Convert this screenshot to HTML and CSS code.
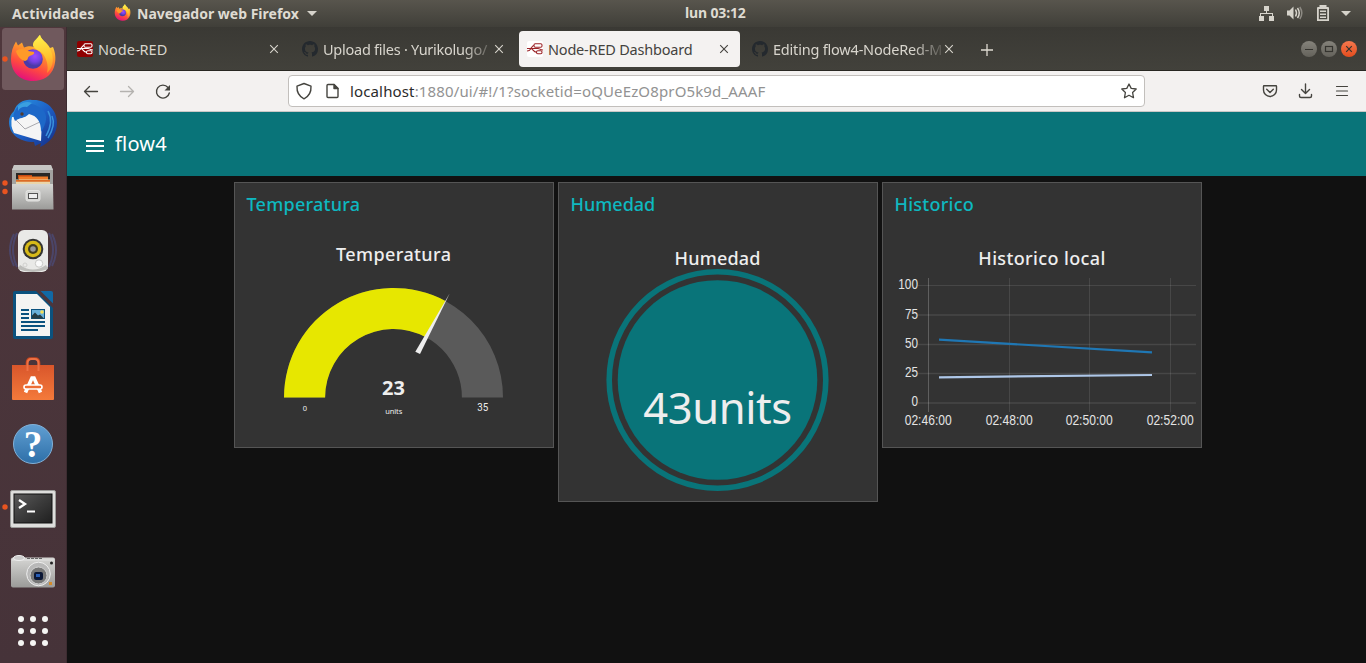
FILE: index.html
```html
<!DOCTYPE html>
<html lang="es">
<head>
<meta charset="utf-8">
<title>Node-RED Dashboard</title>
<link rel="stylesheet" href="styles.css">
</head>
<body>
<svg class="defs" width="0" height="0">
  <defs>
    <linearGradient id="flame" x1=".75" y1="0" x2=".35" y2="1"><stop offset="0" stop-color="#fff44f"/><stop offset=".35" stop-color="#ffa02b"/><stop offset=".7" stop-color="#ff4a3f"/><stop offset="1" stop-color="#e3107c"/></linearGradient>
    <linearGradient id="ear" x1=".5" y1="0" x2=".6" y2="1"><stop offset="0" stop-color="#fff14a"/><stop offset=".6" stop-color="#ffc22f"/><stop offset="1" stop-color="#ff8a2c"/></linearGradient>
    <radialGradient id="globe" cx=".6" cy=".35"><stop offset="0" stop-color="#a04bff"/><stop offset=".6" stop-color="#7542e5"/><stop offset="1" stop-color="#4b3aa8"/></radialGradient>
    <linearGradient id="metal" x1="0" y1="0" x2="0" y2="1"><stop offset="0" stop-color="#d6d6d4"/><stop offset="1" stop-color="#9b9b99"/></linearGradient>
    <linearGradient id="blue" x1="0" y1="0" x2="0" y2="1"><stop offset="0" stop-color="#619fd2"/><stop offset="1" stop-color="#2d6fa8"/></linearGradient>
    <linearGradient id="bird" x1="0" y1="0" x2="1" y2="1"><stop offset="0" stop-color="#2b9be4"/><stop offset=".5" stop-color="#1d5fc6"/><stop offset="1" stop-color="#152a80"/></linearGradient>
    <linearGradient id="bag" x1="0" y1="0" x2="0" y2="1"><stop offset="0" stop-color="#d9562b"/><stop offset="1" stop-color="#f47a3b"/></linearGradient>
    <linearGradient id="screen" x1="0" y1="0" x2="1" y2="1"><stop offset="0" stop-color="#5a5a5a"/><stop offset=".5" stop-color="#3b3b3b"/><stop offset="1" stop-color="#1f1f1f"/></linearGradient>
    <symbol id="firefox" viewBox="0 0 46 48">
      <path fill="url(#flame)" d="M23 47C9 47 1 37 1 25 1 18 3 12 6 7.500L8 11.500 12 8.500 14 13.500C18 12 21 12 24 13L27 6C28 3 29 1.500 30 1 31 6 37 8 40 14L43 13C46 20 46 27 44 33 41 42 33 47 23 47Z"/>
      <path fill="url(#ear)" d="M30 1C31 6 38 9 41 17 45 26 42 35 37 39 39 31 36 24 33 20 30 16 22 15 23 10 24 6 28 4 30 1Z"/>
      <circle cx="23" cy="25" r="9.800" fill="url(#globe)"/>
      <path fill="#ff9a28" d="M6 17C10 14 14 14 18 17L24 18C25 21 21 21 19 22.500 17 24 19 26 15 27 11 26 7 22 6 17Z"/>
    </symbol>
    <symbol id="github" viewBox="0 0 16 16"><path fill="#24292e" d="M8 0C3.580 0 0 3.580 0 8c0 3.540 2.290 6.530 5.470 7.590.4.070.55-.17.55-.38 0-.19-.01-.82-.01-1.490-2.010.37-2.530-.49-2.690-.94-.09-.23-.48-.94-.82-1.130-.28-.15-.68-.52-.01-.53.63-.01 1.080.58 1.230.82.72 1.210 1.870.87 2.330.66.07-.52.28-.87.51-1.070-1.780-.2-3.640-.89-3.640-3.950 0-.87.31-1.590.82-2.150-.08-.2-.36-1.020.08-2.120 0 0 .67-.21 2.200.82.64-.18 1.320-.27 2-.27s1.360.09 2 .27c1.530-1.040 2.200-.82 2.200-.82.44 1.100.16 1.920.08 2.120.51.56.82 1.270.82 2.150 0 3.070-1.870 3.750-3.650 3.950.29.25.54.73.54 1.480 0 1.070-.01 1.930-.01 2.200 0 .21.15.46.55.38A8.010 8.010 0 0 0 16 8c0-4.420-3.580-8-8-8z"/></symbol>
    <symbol id="nodes" viewBox="0 0 16 16"><g fill="none" stroke="currentColor" stroke-width="1.100"><rect x="7" y="2.700" width="8" height="3.600" rx="1.200"/><rect x="9.500" y="9.700" width="5.500" height="3.100" rx="1.200"/><path d="M0 7.500H3C5.500 7.500 4.500 4.500 7 4.500M0 10C2 10 3 9.500 4 7.500C5.500 7.500 6.500 11.200 9.500 11.200M4 7.500H11C13 7.500 13 9 16 9"/></g></symbol>
    <symbol id="close" viewBox="0 0 10 10"><path d="M1.200 1.200 8.800 8.800M8.800 1.200 1.200 8.800" stroke="currentColor" stroke-width="1.100"/></symbol>
  </defs>
</svg>

<header class="topbar">
  <span class="activities">Actividades</span>
  <svg class="app-icon" width="17" height="17"><use href="#firefox"/></svg>
  <span class="app-name">Navegador web Firefox</span>
  <i class="caret"></i>
  <span class="clock">lun 03:12</span>
  <svg class="tray" width="120" height="27" viewBox="1246 0 120 27" fill="#d6d3cb">
    <path d="M1264 6h5v5h-2v2h6v3h1v5h-5v-5h3v-2h-11v2h3v5h-5v-5h1v-3h6v-2h-2z"/>
    <path d="M1287 10.500h2.500l4-4v13l-4-4H1287z"/>
    <path d="M1295.500 9.500q2 3.500 0 7M1297.500 8q3.500 5 0 10" fill="none" stroke="#d6d3cb" stroke-width="1.500"/>
    <path d="M1299.800 7q4 6 0 12" fill="none" stroke="#8d8a83" stroke-width="1.500"/>
    <path d="M1318 7h1.500V5h7v2h1.500q1 0 1 1V21h-12V8q0-1 1-1zm.8 2V19.200h8.400V9z" fill-rule="evenodd"/>
    <path d="M1320 10.500h6v1.500h-6zm0 3h6v1.500h-6zm0 3h6v1.500h-6z"/>
    <path d="M1341 11h10l-5 5z"/>
  </svg>
</header>

<div class="desktop">
  <nav class="dock">
    <div class="launcher"><svg viewBox="0 0 67 64"><rect x="2" y="1" width="62" height="62" rx="3.500" fill="#70595d"/><circle cx="5" cy="32" r="2.700" fill="#e95420"/><use href="#firefox" x="10" y="7" width="46" height="48"/></svg></div>
    <div class="launcher"><svg viewBox="0 0 67 64">
      <path fill="url(#bird)" d="M14 20C17 11 25 8 32 9 46 8 57 18 57 32 57 43 50 52 40 56L41 52 35 55 34 51C19 51 9 43 9 31 9 26 11 23 14 20Z"/>
      <path fill="#f5f5f5" d="M12 26Q23 27 30 22L42 29 41 50 14 42Q10 35 12 26Z"/><path fill="none" stroke="#a9a9ae" d="M16 29 25 38 42 30"/>
      <path fill="#1d68c8" d="M15 20C20 9 33 11 42 18 49 24 46 33 41 41 41 30 37 25 29 23 24 28 20 26 15 30 13 26 13 23 15 20Z"/><circle cx="22" cy="23" r="1.700" fill="#523b30"/>
      <path fill="#3a9fe0" d="M18 15Q25 9 32 12L27 16Q21 15 18 20z"/><path fill="none" stroke="#3a91dc" stroke-width="1.500" d="M48 20Q54 31 46 45M52 25Q56 34 48 47"/>
    </svg></div>
    <div class="launcher"><svg viewBox="0 0 67 64">
      <path d="M14 10h37l2 5v27H12V15z" fill="#a3a3a1"/><path d="M14 10h37l2 5H12z" fill="#c6c6c4"/><path d="M16 18h34v14H16z" fill="#292725"/><path d="M18 20h14v4H18z" fill="#c64b13"/><path d="M19 21.500h29v4H19z" fill="#f07c28"/><path d="M16 24.500h34v5H16z" fill="#ead5aa"/><path d="M16 25h34v1.800H16z" fill="#db6b26"/>
      <path d="M12 29h41l.5 25.500H12z" fill="url(#metal)"/><rect x="26" y="35.500" width="14" height="10.500" rx="2" fill="#d8d8d6" stroke="#e4e4e2"/><rect x="28.500" y="38.500" width="9" height="5" fill="#eee" stroke="#555"/>
      <circle cx="5" cy="28" r="2.700" fill="#e95420"/><circle cx="5" cy="36.500" r="2.700" fill="#e95420"/>
    </svg></div>
    <div class="launcher"><svg viewBox="0 0 67 64">
      <path d="M14 15Q6 31 14 47M52 15Q60 31 52 47M17 14Q9 31 17 48M49 14Q57 31 49 48" fill="none" stroke="#4b4568" stroke-width="2"/>
      <rect x="18" y="11" width="30" height="42" rx="6" fill="#e9e9e7"/><path d="M20 46Q33 55 46 46L48 50Q33 56 18 50z" fill="#bdbdba"/>
      <circle cx="33" cy="30" r="10.300" fill="#343432"/><circle cx="33" cy="30" r="8.300" fill="#d6b918"/><circle cx="33" cy="30" r="5" fill="#423d20"/><circle cx="33" cy="30" r="2.800" fill="#999"/><circle cx="39" cy="44.500" r="3.700" fill="#fafafa" stroke="#c8c8c6"/><circle cx="25" cy="46" r="2" fill="none" stroke="#d0d0ce"/>
    </svg></div>
    <div class="launcher"><svg viewBox="0 0 67 64">
      <path d="M15 8H39L53 22V54Q53 56 51 56H15Q13 56 13 54V10Q13 8 15 8z" fill="#0b527e"/><path d="M16 11H37L50 24V53H16z" fill="#f4f4f2"/><path d="M36 8 53 25V21L40 8z" fill="#4c363c"/><path d="M40.500 8H51Q53 8 53 10V20.500z" fill="#1169a5"/>
      <path d="M21 27h8M21 31h8M21 35h8M21 39h24M21 43h24M21 47h17" stroke="#0b527e" stroke-width="2"/><rect x="31.500" y="26.500" width="13" height="9" fill="#68afd8" stroke="#0b527e"/><circle cx="42" cy="29" r="1.800" fill="#f5df55"/><path d="M32 35.500v-3l3-3 3 3 2-1 4 4z" fill="#243b43"/>
    </svg></div>
    <div class="launcher"><svg viewBox="0 0 67 64">
      <path d="M27 23V16Q27 11.500 31 11.500H35Q39 11.500 39 16V23" fill="none" stroke="#c6451d" stroke-width="2.700"/><path d="M12 18H54V52Q54 53 53 53H13Q12 53 12 52z" fill="url(#bag)"/><path d="M27.500 24V16.500Q27.500 12 31.500 12H34.500Q38.500 12 38.500 16.500V24" fill="none" stroke="#ed7145" stroke-width="2"/>
      <path d="M25.500 45.500 32 31H34L40.500 45.500" fill="none" stroke="#fff" stroke-width="3.600"/><rect x="24" y="38" width="18" height="4" rx="2" fill="#ed6c35" stroke="#fff" stroke-width="1.600"/>
    </svg></div>
    <div class="launcher"><svg viewBox="0 0 67 64">
      <circle cx="33" cy="33" r="19.500" fill="url(#blue)" stroke="#82b1d8"/><text x="33" y="45.500" class="help">?</text>
    </svg></div>
    <div class="launcher"><svg viewBox="0 0 67 64">
      <rect x="10.500" y="15.500" width="45" height="37" rx="1.500" fill="#dededc" stroke="#9c9c9a"/><rect x="14" y="19" width="38" height="29" fill="url(#screen)" stroke="#111"/><path d="M19 25 25 29 19 33" fill="none" stroke="#fff" stroke-width="2.300"/><path d="M27 36.500h8" stroke="#fff" stroke-width="2"/><circle cx="5" cy="32" r="2.700" fill="#e95420"/>
    </svg></div>
    <div class="launcher"><svg viewBox="0 0 67 64">
      <rect x="11" y="18.500" width="44" height="30" rx="2" fill="url(#metal)"/><path d="M12 21h42" stroke="#e4e4e4"/><ellipse cx="19" cy="19" rx="5.500" ry="2.500" fill="#ccc" stroke="#eee"/><path d="M27 19.500h16" stroke="#666" stroke-dasharray="3 1"/>
      <circle cx="38.500" cy="35" r="11.800" fill="#b8b8b8" stroke="#eee"/><circle cx="38.500" cy="36.500" r="8.500" fill="#777" stroke="#d0d0d0"/><rect x="34" y="33" width="9" height="8" rx="2" fill="#0b1735"/><path d="M36 35h4v3h-4z" fill="#285db5"/><circle cx="51.500" cy="24" r="1.500" fill="#222"/><path d="M49 43h3v3h-3z" fill="#d58b2a"/>
    </svg></div>
    <div class="launcher"><svg viewBox="0 0 67 64" fill="#f5f5f3"><circle cx="21" cy="16" r="3"/><circle cx="33" cy="16" r="3"/><circle cx="45" cy="16" r="3"/><circle cx="21" cy="28" r="3"/><circle cx="33" cy="28" r="3"/><circle cx="45" cy="28" r="3"/><circle cx="21" cy="40" r="3"/><circle cx="33" cy="40" r="3"/><circle cx="45" cy="40" r="3"/></svg></div>
  </nav>

  <section class="browser">
    <div class="tabs">
      <div class="tab"><svg class="favicon red" width="16" height="16"><use href="#nodes"/></svg><span class="tab-title">Node-RED</span><svg class="close" width="10" height="10"><use href="#close"/></svg></div>
      <div class="tab"><svg class="favicon" width="16" height="16"><use href="#github"/></svg><span class="tab-title faded upload">Upload files · Yurikolugo/</span><svg class="close" width="10" height="10"><use href="#close"/></svg></div>
      <div class="tab active"><svg class="favicon light" width="16" height="16"><use href="#nodes"/></svg><span class="tab-title dashboard-title">Node-RED Dashboard</span><svg class="close" width="10" height="10"><use href="#close"/></svg></div>
      <div class="tab"><svg class="favicon" width="16" height="16"><use href="#github"/></svg><span class="tab-title faded editing">Editing flow4-NodeRed-M</span><svg class="close" width="10" height="10"><use href="#close"/></svg></div>
      <svg class="new-tab" width="12" height="12" viewBox="0 0 12 12"><path d="M6 0v12M0 6h12" stroke="#dfdbd2" stroke-width="1.300"/></svg>
      <div class="window-controls">
        <svg class="control" viewBox="0 0 16 16"><path d="M4 8.500h8"/></svg>
        <svg class="control" viewBox="0 0 16 16"><rect x="4.500" y="5.500" width="7" height="5"/></svg>
        <svg class="control quit" viewBox="0 0 16 16"><path d="m5.200 5.200 5.600 5.600m0-5.600-5.600 5.600"/></svg>
      </div>
    </div>

    <div class="toolbar">
      <svg class="nav-icons" width="110" height="40" viewBox="67 71 110 40" fill="none" stroke="#45443f" stroke-width="1.300" stroke-linecap="round" stroke-linejoin="round">
        <path d="M84.500 91.500h13M89.500 86.500l-5 5 5 5"/><path d="M120.500 91.500h13M128.500 86.500l5 5-5 5" stroke="#b4b2af"/>
        <path d="M169.300 93A6.500 6.500 0 1 1 168 87.500" stroke-width="1.400"/><path d="M170 85v5.500h-5.500z" fill="#45443f" stroke="none"/>
      </svg>
      <div class="url">
        <svg width="52" height="30" viewBox="289 76 52 30" fill="none" stroke="#45443f" stroke-width="1.400" stroke-linejoin="round"><path d="M304 83.500 311 86.200Q311.500 95 304 98.800 296.500 95 297 86.200z"/><path d="M328 84.500h6l4 4v8q0 1-1 1h-9q-1 0-1-1v-11q0-1 1-1z"/><path d="M334 84.500v4h4z" fill="#45443f"/></svg>
        <span class="address"><b>localhost</b>:1880/ui/#!/1?socketid=oQUeEzO8prO5k9d_AAAF</span>
        <svg class="star" width="16" height="16" viewBox="0 0 16 16"><path d="M8 1 10.200 5.400 15.200 6 11.600 9.500 12.500 14.700 8 12.300 3.500 14.700 4.400 9.500.8 6 5.800 5.400z" fill="none" stroke="#45443f" stroke-width="1.300" stroke-linejoin="round"/></svg>
      </div>
      <svg class="actions" width="100" height="40" viewBox="1256 71 100 40" fill="none" stroke="#45443f" stroke-width="1.400" stroke-linecap="round" stroke-linejoin="round"><path d="M1264 85.700h12q.5 0 .5.600V90a6.500 6.500 0 0 1-13 0v-3.700q0-.6.500-.6zM1266.700 89.200l3.300 3.300 3.300-3.300M1305.500 84v9.500M1301.500 89.500l4 4 4-4M1299.500 94.500v1.500q0 1.500 1.500 1.500h9q1.500 0 1.500-1.500v-1.500"/><path d="M1336.500 86.500h11M1336.500 91h11M1336.500 95.500h11" stroke-width="1.200"/></svg>
    </div>

    <div class="app-header"><span class="menu"><i></i><i></i><i></i></span><h1>flow4</h1></div>

    <main class="dashboard">
      <section class="card">
        <h2>Temperatura</h2>
        <svg class="widget" width="318" height="222" viewBox="235 225 318 222">
          <text class="label" x="393.500" y="260.500" textLength="115">Temperatura</text>
          <path fill="#5a5a5a" d="M284 397.400A109.500 109.500 0 0 1 503 397.400H461.900A68.400 68.400 0 0 0 325.100 397.400z"/>
          <path fill="#e7e700" d="M284 397.400A109.500 109.500 0 0 1 445.400 301L425.900 337.200A68.400 68.400 0 0 0 325.100 397.400z"/>
          <path fill="#eee" d="M449.800 293.200 420 354 415.300 351.800z"/>
          <text class="value" x="393.500" y="394.800" textLength="23">23</text>
          <text class="small" x="393.800" y="414" textLength="17">units</text>
          <text class="small" x="305" y="411" textLength="4.500">0</text>
          <text class="max" x="482.700" y="411" textLength="11" lengthAdjust="spacingAndGlyphs">35</text>
        </svg>
      </section>
      <section class="card tall">
        <h2 class="humidity">Humedad</h2>
        <svg class="widget" width="318" height="276" viewBox="559 225 318 276">
          <text class="label" x="717.500" y="264.800" textLength="86">Humedad</text>
          <circle cx="717.500" cy="380" r="108.300" fill="none" stroke="#097479" stroke-width="5.600"/>
          <circle cx="717.500" cy="380" r="99.800" fill="#097479"/>
          <text class="level" x="717.700" y="424.300" textLength="149">43units</text>
        </svg>
      </section>
      <section class="card">
        <h2 class="history">Historico</h2>
        <svg class="widget" width="318" height="222" viewBox="883 225 318 222">
          <text class="label" x="1041.800" y="264.800" textLength="127">Historico local</text>
          <g fill="none" stroke="#fff" stroke-opacity=".1">
            <path d="M918 285.500h278M1009.500 278v134M1089.500 278v134M1170.500 278v134"/>
            <path d="M918 315h278M918 344.500h278M918 373.500h278M918 403h278" stroke-width="1.600"/>
            <path d="M928.500 278v134" stroke-opacity=".22"/>
          </g>
          <path d="M939 339.700 1152 352.300" stroke="#1f77b4" stroke-width="2.200"/>
          <path d="M939 377.300 1152 375" stroke="#aec7e8" stroke-width="2.200"/>
          <g class="scale">
            <text x="918" y="288.600" textLength="19.700" lengthAdjust="spacingAndGlyphs">100</text>
            <text x="918" y="318.500" textLength="13" lengthAdjust="spacingAndGlyphs">75</text>
            <text x="918" y="347.800" textLength="13" lengthAdjust="spacingAndGlyphs">50</text>
            <text x="918" y="376.600" textLength="13" lengthAdjust="spacingAndGlyphs">25</text>
            <text x="918" y="406.300" textLength="6.500" lengthAdjust="spacingAndGlyphs">0</text>
          </g>
          <g class="scale times">
            <text x="928.200" y="424.500" textLength="47" lengthAdjust="spacingAndGlyphs">02:46:00</text>
            <text x="1009.200" y="424.500" textLength="47" lengthAdjust="spacingAndGlyphs">02:48:00</text>
            <text x="1089.200" y="424.500" textLength="47" lengthAdjust="spacingAndGlyphs">02:50:00</text>
            <text x="1170.200" y="424.500" textLength="47" lengthAdjust="spacingAndGlyphs">02:52:00</text>
          </g>
        </svg>
      </section>
    </main>
  </section>
</div>
</body>
</html>
```
FILE: styles.css
```css
* { box-sizing: border-box; }
body {
  margin: 0;
  width: 1366px;
  height: 663px;
  overflow: hidden;
  display: flex;
  flex-direction: column;
  background: #111;
  font-family: "Noto Sans", "Open Sans", sans-serif;
}
svg { display: block; flex: none; }
.defs { position: absolute; }
h1, h2 { margin: 0; }

.topbar {
  position: relative;
  height: 27px;
  flex: none;
  display: flex;
  align-items: center;
  padding-left: 12px;
  background: linear-gradient(#58554d, #403f39);
  color: #dfdbd2;
  font-size: 14px;
  font-weight: 700;
  white-space: nowrap;
}
.activities { width: 102px; letter-spacing: 0.15px; }
.app-icon { margin-top: -2px; }
.app-name { margin-left: 6px; width: 166px; }
.caret { margin-left: 4px; border: 5px solid transparent; border-top-color: #d6d3cb; border-bottom: 0; }
.clock { position: absolute; left: 685px; top: 3px; letter-spacing: -0.15px; }
.tray { margin-left: auto; }

.desktop { display: flex; flex: 1; min-height: 0; }
.dock {
  width: 67px;
  flex: none;
  overflow: hidden;
  background: linear-gradient(#4f373c, #463339);
  border-right: 1px solid #3d2c31;
}
.launcher { height: 64px; }
.launcher svg { width: 67px; height: 64px; }
.help { font: bold 37px "Liberation Serif", serif; fill: #fff; text-anchor: middle; }

.browser { flex: 1; min-width: 0; display: flex; flex-direction: column; }
.tabs {
  height: 44px;
  flex: none;
  display: flex;
  align-items: flex-start;
  gap: 4px;
  padding: 4px 9px 0 2px;
  background: linear-gradient(#3a3934, #42413b);
  border-bottom: 1px solid #282722;
}
.tab {
  width: 221px;
  height: 36px;
  display: flex;
  align-items: center;
  padding: 0 11px 0 8px;
  border-radius: 4px;
  color: #d8d5cd;
  font-size: 14.5px;
}
.tab.active { background: #f4f2f1; color: #44423e; }
.favicon { margin-right: 5px; }
.favicon.red { background: #8f0000; color: #fff; border-radius: 2px; }
.favicon.light { background: #fff; color: #9c2529; border-radius: 2px; }
.tab-title { flex: 1; overflow: hidden; white-space: nowrap; margin-top: -1px; }
.upload { letter-spacing: -0.25px; }
.dashboard-title { letter-spacing: -0.2px; }
.editing { letter-spacing: -0.2px; }
.faded { mask-image: linear-gradient(to right, #000 82%, transparent 102%); }
.new-tab { margin: 13px 0 0 12px; }
.window-controls { display: flex; gap: 4px; margin: 10px 0 0 auto; }
.control {
  width: 16px;
  height: 16px;
  border-radius: 50%;
  background: linear-gradient(#85837b, #64625b);
  fill: none;
  stroke: #35342f;
  stroke-width: 1.200;
}
.quit { background: linear-gradient(#f6784e, #e34d1e); }

.toolbar {
  height: 41px;
  flex: none;
  display: flex;
  background: #f3f1f0;
  border-bottom: 1px solid #c9c7c5;
  padding-right: 10px;
}
.url {
  margin: 4px 0 0 111px;
  width: 857px;
  height: 32px;
  display: flex;
  align-items: center;
  background: #fff;
  border: 1px solid #c2bfbc;
  border-radius: 4px;
  padding-right: 7px;
}
.address { margin-left: 9px; color: #929292; font-size: 15px; letter-spacing: 0.14px; white-space: nowrap; }
.address b { font-weight: 400; color: #2b2b2b; }
.star { margin-left: auto; }
.actions { margin-left: auto; }

.app-header {
  height: 64px;
  flex: none;
  display: flex;
  align-items: center;
  padding-left: 19px;
  background: #097479;
}
.menu { width: 18px; display: flex; flex-direction: column; gap: 3px; margin-top: 4px; }
.menu i { height: 2px; background: #fff; }
h1 { margin: -1px 0 0 11px; color: #fff; font-size: 20px; font-weight: 400; letter-spacing: 0.2px; }

.dashboard { display: flex; align-items: flex-start; gap: 4px; padding: 6px 0 0 167px; }
.card { width: 320px; height: 266px; background: #333; border: 1px solid #555; }
.tall { height: 320px; }
h2 { height: 42px; padding-left: 11.5px; line-height: 42px; font-size: 18px; font-weight: 550; letter-spacing: 0.25px; color: #0eb8c0; }
.humidity { letter-spacing: 0; }
.widget { overflow: visible; }
.widget text { text-anchor: middle; fill: #eee; }
.widget .label { font-size: 18px; font-weight: 550; }
.widget .value { font-size: 20px; font-weight: 700; }
.widget .small { font-size: 7.500px; }
.widget .max { font: 11px Roboto, sans-serif; }
.widget .level { font-size: 43.500px; }
.widget .scale text { font: 15px "Liberation Sans", sans-serif; text-anchor: end; fill: #e4e4e4; }
.widget .times text { text-anchor: middle; }
```
